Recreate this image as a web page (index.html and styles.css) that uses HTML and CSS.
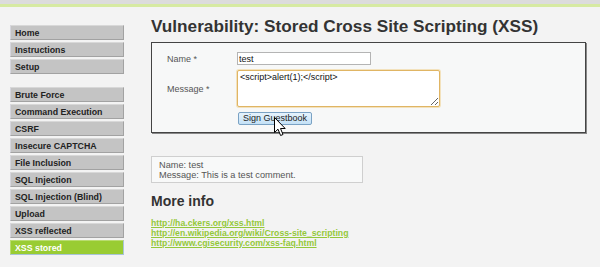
FILE: index.html
```html
<!doctype html>
<html>
<head>
<meta charset="utf-8">
<link rel="stylesheet" href="styles.css">
</head>
<body>
<div id="header"></div>
<div id="container">
	<div id="main_menu">
		<ul class="menu_group">
			<li><a href="#">Home</a></li>
			<li><a href="#">Instructions</a></li>
			<li><a href="#">Setup</a></li>
		</ul>
		<ul class="menu_group">
			<li><a href="#">Brute Force</a></li>
			<li><a href="#">Command Execution</a></li>
			<li><a href="#">CSRF</a></li>
			<li><a href="#">Insecure CAPTCHA</a></li>
			<li><a href="#">File Inclusion</a></li>
			<li><a href="#">SQL Injection</a></li>
			<li><a href="#">SQL Injection (Blind)</a></li>
			<li><a href="#">Upload</a></li>
			<li><a href="#">XSS reflected</a></li>
			<li class="selected"><a href="#">XSS stored</a></li>
		</ul>
	</div>
	<div id="main_body">
		<h1>Vulnerability: Stored Cross Site Scripting (XSS)</h1>
		<div class="vulnerable_code_area">
			<form class="guestform">
				<label class="lbl">Name *</label>
				<input class="txt" type="text" value="test">
				<label class="lbl">Message *</label>
				<textarea class="msg">&lt;script&gt;alert(1);&lt;/script&gt;</textarea>
				<span></span>
				<div><button type="button" class="btn">Sign Guestbook</button></div>
			</form>
		</div>
		<div class="comment">Name: test<br>Message: This is a test comment.</div>
		<h2>More info</h2>
		<ul class="links">
			<li><a href="#">http://ha.ckers.org/xss.html</a></li>
			<li><a href="#">http://en.wikipedia.org/wiki/Cross-site_scripting</a></li>
			<li><a href="#">http://www.cgisecurity.com/xss-faq.html</a></li>
		</ul>
	</div>
</div>
<svg class="cursor" width="13" height="20" viewBox="0 0 13 20">
	<path d="M0.5 0.5 L0.5 15.5 L4 12.2 L6.6 18.5 L9 17.5 L6.5 11.5 L11.2 11.5 Z" fill="#fff" stroke="#000" stroke-width="1" stroke-linejoin="round"/>
</svg>
</body>
</html>
```
FILE: styles.css
```css
body{
	margin:0;
	background:#f3f3f3;
	font-family:"Liberation Sans",Arial,sans-serif;
	color:#333;
	font-size:9.2px;
	position:relative;
}
#header{
	height:4px;
	background:#dcdcdc;
	border-bottom:3px solid #d6eaa2;
}
#container{
	display:flex;
}
#main_menu{
	width:114px;
	margin-left:10px;
	padding-top:18px;
}
.menu_group{
	list-style:none;
	margin:0 0 13px 0;
	padding:0;
}
.menu_group li{
	margin-bottom:2px;
	background:#c4c4c4;
	border-top:1px solid #d8d8d8;
	border-left:1px solid #d6d6de;
	border-right:1px solid #a2a2a2;
	border-bottom:1px solid #a2a2a2;
	padding:1px 0 0 4px;
	line-height:12px;
	font-size:8.8px;
	font-weight:bold;
}
.menu_group li a{
	color:#222;
	text-decoration:none;
	display:block;
}
.menu_group li.selected{
	background:#99cc33;
	border-color:#b9dc70 #a8c4d8 #a8c4d8 #b9dc70;
}
.menu_group li.selected a{
	color:#fff;
}
#main_body{
	margin-left:27px;
}
h1{
	font-size:17.2px;
	line-height:20px;
	margin:9px 0 6px 0;
	color:#333;
}
.vulnerable_code_area{
	width:435px;
	background:#f7f8f8;
	border:1px solid #444;
	box-shadow:1px 1px 0 #888;
	padding:9px 0 8px 15px;
	box-sizing:border-box;
	height:91px;
}
.guestform{
	display:grid;
	grid-template-columns:70px auto;
	row-gap:5px;
	align-items:center;
	justify-items:start;
}
.lbl{
	color:#555;
	font-size:9px;
}
.txt{
	width:134px;
	height:13px;
	box-sizing:border-box;
	border:1px solid #b4b4b4;
	background:#fff;
	font-family:"Liberation Sans",Arial,sans-serif;
	font-size:9px;
	padding:0 1px;
	margin:0;
	color:#111;
}
.msg{
	width:203px;
	height:37px;
	box-sizing:border-box;
	border:1px solid #e0b564;
	box-shadow:0 0 0 1px #f3e2bd;
	border-radius:2px;
	background:#fff;
	font-family:"Liberation Sans",Arial,sans-serif;
	font-size:9px;
	padding:1px 2px;
	margin:0;
	color:#111;
	outline:none;
}
.btn{
	width:74px;
	height:13px;
	padding:0;
	margin:0 0 0 1px;
	border:1px solid #7aa2c4;
	border-radius:2px;
	background:linear-gradient(#e6f3fd,#c4e1f6);
	font-family:"Liberation Sans",Arial,sans-serif;
	font-size:9px;
	line-height:11px;
	color:#222;
}
.comment{
	width:212px;
	box-sizing:border-box;
	margin-top:23px;
	border:1px solid #cfcfcf;
	background:#f8f9f9;
	padding:3px 0 2px 7px;
	line-height:10px;
	color:#555;
}
h2{
	font-size:14px;
	line-height:16px;
	margin:10px 0 0 0;
	color:#333;
}
.links{
	list-style:none;
	margin:9px 0 0 0;
	padding:0;
	line-height:10px;
	font-size:8.7px;
	font-weight:bold;
}
.links a{
	color:#94c83a;
}
.cursor{
	position:absolute;
	left:274px;
	top:117px;
}
```
